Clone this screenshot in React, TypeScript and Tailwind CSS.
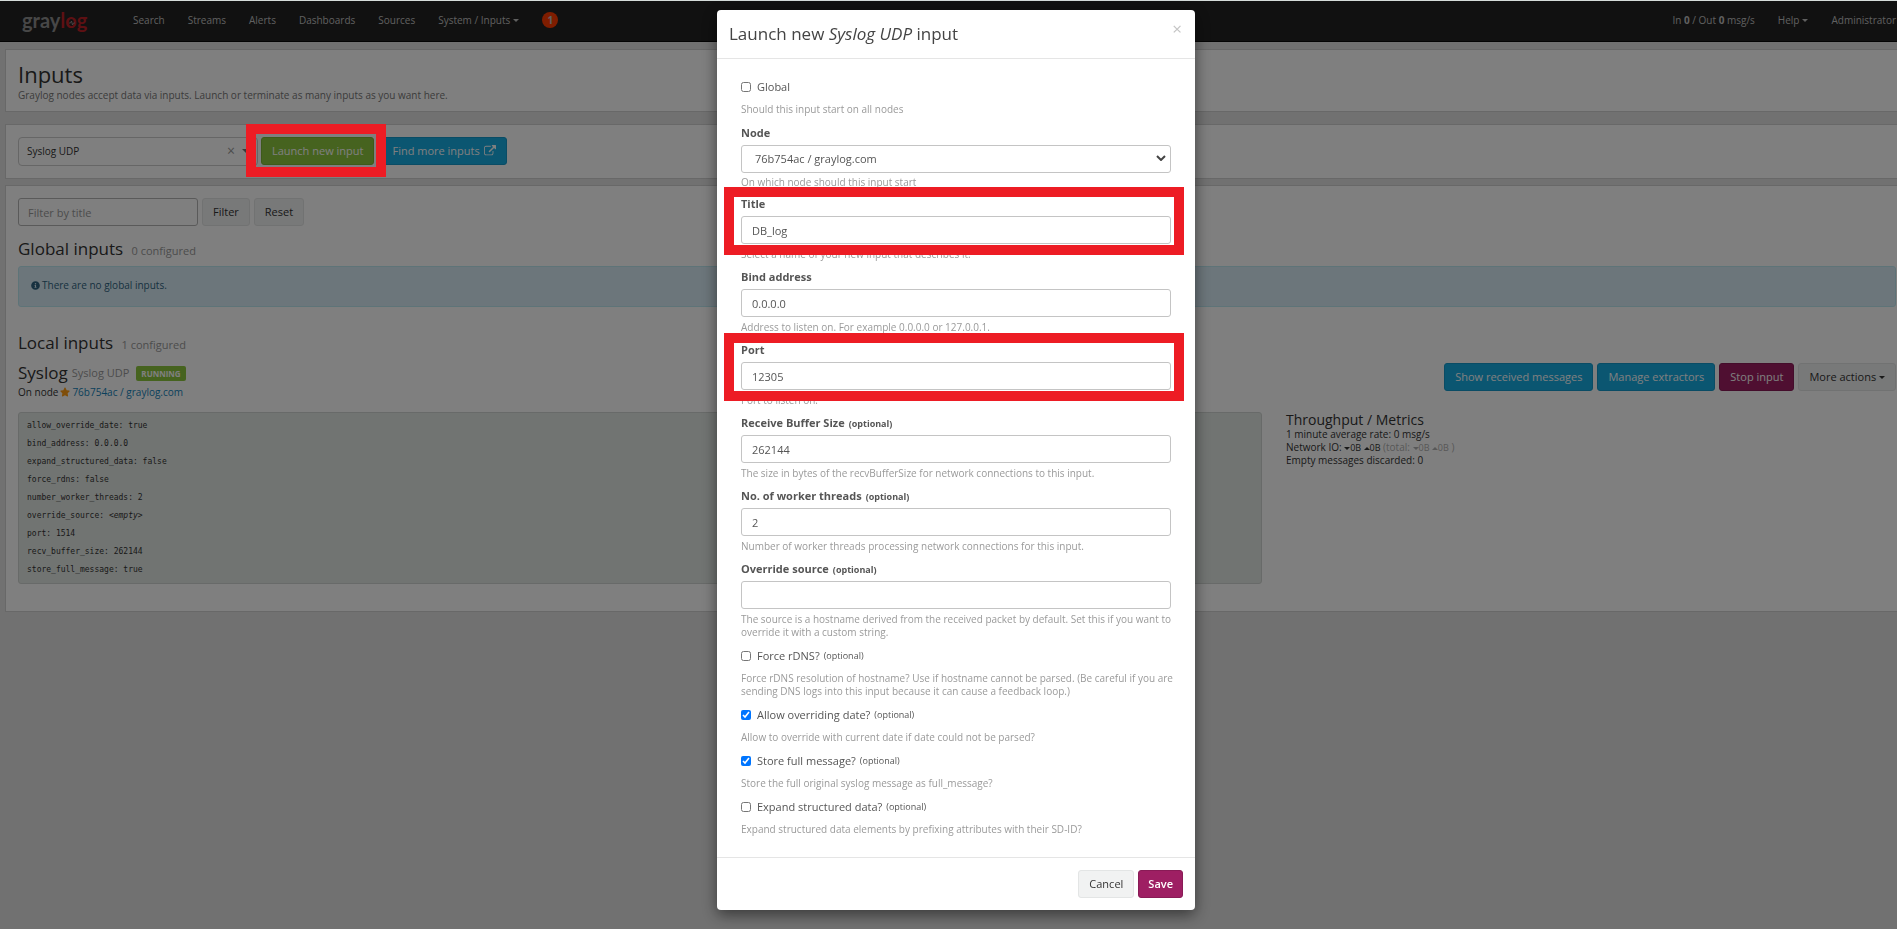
import React, { useState } from 'react';
import { FaInfoCircle, FaStar } from 'react-icons/fa';

interface FieldProps {
  id: string;
  label: string;
  help: string;
  optional?: boolean;
  marked?: boolean;
  value?: string;
}

interface CheckFieldProps {
  id: string;
  label: string;
  help: string;
  optional?: boolean;
  checked?: boolean;
}

const NAV_ITEMS = ['Search', 'Streams', 'Alerts', 'Dashboards', 'Sources'];

const CONFIGURATION = [
  ['allow_override_date', 'true'],
  ['bind_address', '0.0.0.0'],
  ['expand_structured_data', 'false'],
  ['force_rdns', 'false'],
  ['number_worker_threads', '2'],
  ['override_source', ''],
  ['port', '1514'],
  ['recv_buffer_size', '262144'],
  ['store_full_message', 'true'],
];

const Caret = ({ up = false }: { up?: boolean }) => (
  <span
    className={`inline-block border-x-[3px] border-x-transparent align-middle ${
      up ? 'border-b-[3px] border-b-current' : 'border-t-[3px] border-t-current'
    }`}
  />
);

const Logo = () => (
  <svg viewBox="0 0 68 28" className="h-7 w-[68px] overflow-visible" role="img" aria-label="graylog">
    <text x="0" y="21" fontSize="20" fontWeight="700" fontFamily="Lato, sans-serif" fill="#8f8f8f">
      gray<tspan fill="#bb2026">log</tspan>
    </text>
    <path d="M47 16h1.5l1-2 1 4 1-2h1.5" fill="none" stroke="#9a9a9a" strokeWidth="0.8" />
  </svg>
);

const ExternalLinkIcon = () => (
  <svg viewBox="0 0 1792 1792" className="size-3 fill-current" aria-hidden="true">
    <path d="M1408 928v320q0 119-84.500 203.500t-203.500 84.500h-832q-119 0-203.500-84.500t-84.500-203.500v-832q0-119 84.500-203.500t203.500-84.500h704q14 0 23 9t9 23v64q0 14-9 23t-23 9h-704q-66 0-113 47t-47 113v832q0 66 47 113t113 47h832q66 0 113-47t47-113v-320q0-14 9-23t23-9h64q14 0 23 9t9 23zm384-864v512q0 26-19 45t-45 19-45-19l-176-176-652 652q-10 10-23 10t-23-10l-114-114q-10-10-10-23t10-23l652-652-176-176q-19-19-19-45t19-45 45-19h512q26 0 45 19t19 45z" />
  </svg>
);

const NavBar = () => (
  <header className="flex h-[41px] items-center border-b border-[#080808] bg-[#222] pl-[22px] text-[10px] text-[#c0c0c0]">
    <a href="#" className="mr-[43px]"><Logo /></a>
    <nav className="flex items-center gap-[23px] pb-[2px]">
      {NAV_ITEMS.map((item) => (
        <a key={item} href="#">{item}</a>
      ))}
      <a href="#" className="flex items-center gap-[3px]">System / Inputs <Caret /></a>
      <a href="#" className="flex size-4 items-center justify-center rounded-full bg-[#ff3b00] font-bold">1</a>
    </nav>
    <nav className="ml-auto flex items-center gap-[23px] pr-px pb-[2px]">
      <span>In <b>0</b> / Out <b>0</b> msg/s</span>
      <a href="#" className="flex items-center gap-[3px]">Help <Caret /></a>
      <a href="#">Administrator</a>
    </nav>
  </header>
);

const HelpText = ({ children }: { children: React.ReactNode }) => (
  <p className="-mr-4 text-[10px] leading-[13px] text-[#9a9a9a]">{children}</p>
);

const Field: React.FC<FieldProps> = ({ id, label, help, optional, marked, value = '' }) => {
  const [text, setText] = useState(value);
  return (
    <div className="relative mb-[7px]">
      <label htmlFor={id} className="mb-[3px] flex h-[18px] items-baseline gap-1 text-[11px] leading-[18px] font-bold">
        {label} {optional && <small className="text-[9px]">(optional)</small>}
      </label>
      <input
        id={id}
        value={text}
        onChange={(e) => setText(e.target.value)}
        className="mb-1 block h-7 w-full rounded-[3px] border border-[#c4c4c4] px-[10px] text-[11px]"
      />
      <HelpText>{help}</HelpText>
      {marked && <span className="pointer-events-none absolute -top-2 -right-[13px] -left-[17px] h-[68px] border-[10px] border-[#ed1c24]" />}
    </div>
  );
};

const CheckField: React.FC<CheckFieldProps> = ({ id, label, help, optional, checked = false }) => {
  const [on, setOn] = useState(checked);
  return (
    <div className="mb-2">
      <label htmlFor={id} className="mb-[7px] flex h-[18px] items-center text-[11px] leading-[18px]">
        <input id={id} type="checkbox" checked={on} onChange={() => setOn(!on)} className="mr-[6px] size-[10px]" />
        {label} {optional && <small className="ml-1 text-[9px]">(optional)</small>}
      </label>
      <HelpText>{help}</HelpText>
    </div>
  );
};

const LaunchModal = () => (
  <div className="fixed inset-x-0 top-[10px] z-20 flex justify-center">
    <div role="dialog" aria-labelledby="modal-title" className="-mr-[15px] w-[478px] rounded-[4px] bg-white text-[#555] shadow-[0_5px_15px_rgba(0,0,0,0.5)]">
      <div className="flex h-[49px] items-start justify-between border-b border-[#e5e5e5] px-3 pt-3">
        <h2 id="modal-title" className="text-[17px] leading-6 text-[#444]">
          Launch new <em>Syslog UDP</em> input
        </h2>
        <button type="button" aria-label="Close" className="pr-px text-[17px] leading-[14px] text-[#c4c4c4]">×</button>
      </div>
      <form className="px-6 pt-[19px]">
        <CheckField id="global" label="Global" help="Should this input start on all nodes" />
        <div className="mb-[6px]">
          <label htmlFor="node" className="mb-[3px] block text-[11px] leading-[18px] font-bold">Node</label>
          <div className="relative mb-[3px]">
            <select id="node" className="block h-7 w-full appearance-none rounded-[3px] border border-[#c4c4c4] bg-white px-[13px] text-[11px]">
              <option>76b754ac / graylog.com</option>
            </select>
            <svg viewBox="0 0 10 6" className="pointer-events-none absolute top-[10px] right-[5px] h-[6px] w-[10px]">
              <path d="M1 1 L5 5 L9 1" fill="none" stroke="#444" strokeWidth="2" />
            </svg>
          </div>
          <HelpText>On which node should this input start</HelpText>
        </div>
        <Field id="title" label="Title" value="DB_log" help="Select a name of your new input that describes it." marked />
        <Field id="bind" label="Bind address" value="0.0.0.0" help="Address to listen on. For example 0.0.0.0 or 127.0.0.1." />
        <Field id="port" label="Port" value="12305" help="Port to listen on." marked />
        <Field id="buffer" label="Receive Buffer Size" value="262144" help="The size in bytes of the recvBufferSize for network connections to this input." optional />
        <Field id="threads" label="No. of worker threads" value="2" help="Number of worker threads processing network connections for this input." optional />
        <Field id="source" label="Override source" help="The source is a hostname derived from the received packet by default. Set this if you want to override it with a custom string." optional />
        <div className="pt-px">
          <CheckField id="rdns" label="Force rDNS?" help="Force rDNS resolution of hostname? Use if hostname cannot be parsed. (Be careful if you are sending DNS logs into this input because it can cause a feedback loop.)" optional />
          <CheckField id="date" label="Allow overriding date?" help="Allow to override with current date if date could not be parsed?" optional checked />
          <CheckField id="full" label="Store full message?" help="Store the full original syslog message as full_message?" optional checked />
          <CheckField id="expand" label="Expand structured data?" help="Expand structured data elements by prefixing attributes with their SD-ID?" optional />
        </div>
      </form>
      <div className="mt-[21px] flex justify-end gap-1 border-t border-[#e5e5e5] p-3">
        <button type="button" className="h-7 rounded-[3px] border border-[#e3e5e5] bg-[#f1f2f2] px-[10px] text-[11px] text-[#333]">Cancel</button>
        <button type="button" className="h-7 rounded-[3px] border border-[#891b56] bg-[#9e1f63] px-[9px] text-[11px] font-semibold text-white">Save</button>
      </div>
    </div>
  </div>
);

const App = () => {
  return (
    <div className="min-h-screen overflow-hidden border-t border-[#d5dcda] bg-[#e3e3e3] font-['Open_Sans',sans-serif] text-[#333]">
      <NavBar />

      <main className="pt-[7px] pl-[5px]">
        <section className="mb-3 h-[63px] border border-r-0 border-[#d1d1d1] bg-white pt-[10px] pl-3">
          <h1 className="text-[22px] leading-7">Inputs</h1>
          <p className="text-[10px] leading-[14px] text-[#777]">
            Graylog nodes accept data via inputs. Launch or terminate as many inputs as you want here.
          </p>
        </section>

        <section className="mb-[6px] flex border border-r-0 border-[#d1d1d1] bg-white py-3 pl-3">
          <div className="relative mr-[3px] w-[240px]">
            <select aria-label="Input type" className="block h-[29px] w-full appearance-none rounded-[4px] border border-[#ccc] px-2 text-[10px]">
              <option>Syslog UDP</option>
            </select>
            <span className="pointer-events-none absolute top-[6px] right-2 flex items-center gap-[7px] text-[14px] leading-4 text-[#999]">
              × <span className="inline-block border-x-[4px] border-t-[4px] border-x-transparent border-t-[#777]" />
            </span>
          </div>
          <div className="relative mr-[7px]">
            <button type="button" className="h-7 rounded-[3px] border border-[#7db435] bg-[#8dc63f] px-[10px] text-[11px] text-white">Launch new input</button>
            <span className="pointer-events-none absolute -top-[13px] -right-3 -left-[15px] z-30 h-[53px] border-[10px] border-[#ed1c24]" />
          </div>
          <a href="#" className="flex h-7 items-center gap-1 rounded-[3px] border border-[#1499ca] bg-[#16ace3] px-[10px] text-[11px] text-white">
            Find more inputs <ExternalLinkIcon />
          </a>
        </section>

        <section className="border border-r-0 border-[#d1d1d1] bg-white pt-3 pr-px pb-[27px] pl-3">
          <form className="mb-[11px] flex gap-1">
            <input aria-label="Filter by title" placeholder="Filter by title" className="h-7 w-[180px] rounded-[3px] border border-[#b5b5b5] px-[9px] text-[11px] placeholder:text-[#999]" />
            <button type="button" className="h-7 rounded-[3px] border border-[#e3e5e5] bg-[#f1f2f2] px-[10px] text-[11px]">Filter</button>
            <button type="button" className="h-7 rounded-[3px] border border-[#e3e5e5] bg-[#f1f2f2] px-[10px] text-[11px]">Reset</button>
          </form>

          <h2 className="mb-[3px] text-[17px] leading-6">
            Global inputs <small className="ml-1 text-[11px] text-[#999]">0 configured</small>
          </h2>
          <div className="flex h-[41px] items-center gap-[2px] rounded-[3px] border border-[#bce8f1] bg-[#d9edf7] px-3 pb-[2px] text-[10px] text-[#2f6380]">
            <FaInfoCircle size={9} /> There are no global inputs.
          </div>

          <h2 className="mt-6 mb-1 text-[17px] leading-6">
            Local inputs <small className="ml-1 text-[11px] text-[#999]">1 configured</small>
          </h2>

          <div className="flex items-start justify-between">
            <div>
              <h3 className="flex items-center gap-1 text-[17px] leading-6">
                Syslog <small className="text-[11px] text-[#999]">Syslog UDP</small>
                <span className="ml-[3px] rounded-[2px] bg-[#8dc63f] px-[5px] text-[8px] leading-[15px] font-bold text-white">RUNNING</span>
              </h3>
              <p className="flex items-center gap-[2px] text-[10px] leading-[14px]">
                On node <FaStar size={10} className="text-[#ff9d14]" /> <a href="#" className="text-[#1482b8]">76b754ac / graylog.com</a>
              </p>
            </div>
            <div className="flex gap-1 pt-[2px] text-[11px]">
              <button type="button" className="h-7 rounded-[3px] border border-[#1499ca] bg-[#16ace3] px-[10px] text-white">Show received messages</button>
              <button type="button" className="h-7 rounded-[3px] border border-[#1499ca] bg-[#16ace3] px-[10px] text-white">Manage extractors</button>
              <button type="button" className="h-7 rounded-[3px] border border-[#891b56] bg-[#9e1f63] px-[10px] text-white">Stop input</button>
              <button type="button" className="h-7 rounded-[3px] border border-[#e3e5e5] bg-[#f1f2f2] px-[10px]">More actions <Caret /></button>
            </div>
          </div>

          <div className="mt-[13px] flex gap-6">
            <ul className="w-[calc(100%*2/3-8px)] rounded-[3px] border border-[#d1d5d2] bg-[#e3e9e5] px-2 py-1 font-['DejaVu_Sans_Mono',monospace] text-[8px] leading-[18px]">
              {CONFIGURATION.map(([key, value]) => (
                <li key={key}>{key}: {value || <i>&lt;empty&gt;</i>}</li>
              ))}
            </ul>
            <div className="text-[10px] leading-[13px]">
              <h3 className="text-[14px] leading-4">Throughput / Metrics</h3>
              <p>1 minute average rate: 0 msg/s</p>
              <p>
                Network IO: <small className="text-[9px]"><Caret />0B <Caret up />0B</small>{' '}
                <span className="text-[#b0b0b0]">(total: <small className="text-[9px]"><Caret />0B <Caret up />0B</small> )</span>
              </p>
              <p>Empty messages discarded: 0</p>
            </div>
          </div>
        </section>
      </main>

      <div className="fixed inset-0 top-px z-10 bg-black/50" />
      <LaunchModal />
    </div>
  );
};

export default App;
